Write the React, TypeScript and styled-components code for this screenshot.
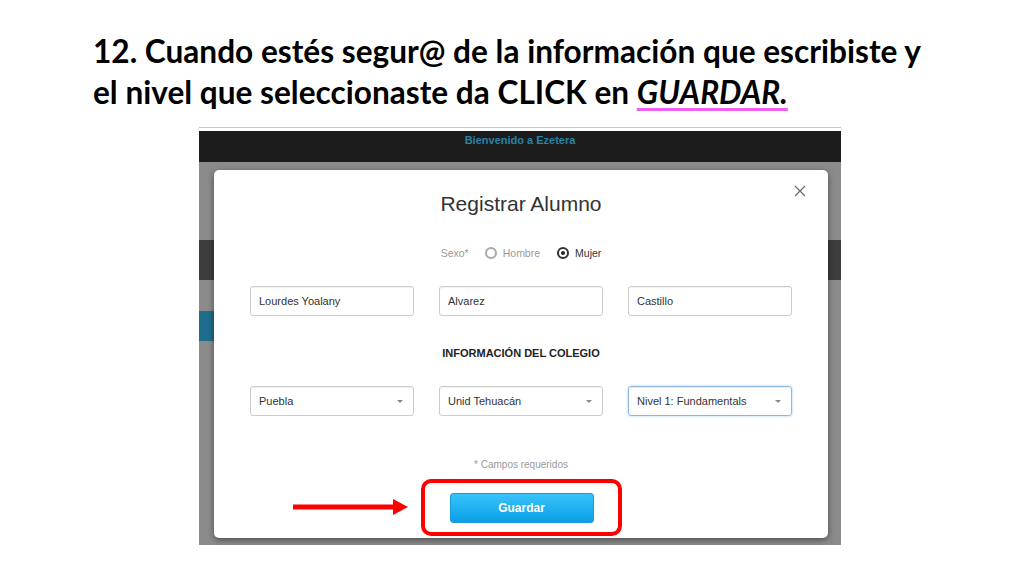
import React from "react";
import styled, { createGlobalStyle } from "styled-components";

const Global = createGlobalStyle`
  html, body { margin: 0; padding: 0; background: #ffffff; }
  body { width: 1024px; height: 576px; overflow: hidden; }
  * { box-sizing: border-box; }
`;

const Slide = styled.div`
  width: 1024px;
  height: 576px;
  background: #ffffff;
  display: flex;
  flex-direction: column;
`;

const Heading = styled.h1`
  margin: 0;
  height: 127px;
  padding: 31px 0 0 93px;
  font-family: Lato, "Open Sans", sans-serif;
  font-weight: 700;
  font-size: 31.6px;
  line-height: 41px;
  color: #000000;
  letter-spacing: 0;
  white-space: nowrap;
`;

const Emph = styled.em`
  font-style: italic;
  text-decoration: underline;
  text-decoration-color: #f060f0;
  text-decoration-thickness: 3px;
  text-underline-offset: 4px;
`;

const Shot = styled.div`
  margin-left: 199px;
  width: 642px;
  height: 418px;
  border-top: 1px solid #c8c8c8;
  padding-top: 3px;
  display: flex;
  flex-direction: column;
`;

const TopBar = styled.div`
  height: 31px;
  background: #1c1c1c;
  display: flex;
  justify-content: center;
  padding-top: 3px;
  font-family: "Liberation Sans", Arial, sans-serif;
  font-weight: 700;
  font-size: 11px;
  line-height: 12px;
  color: #2a82a4;
`;

const Backdrop = styled.div`
  position: relative;
  flex: 1;
  background: #8b8b8b;
  display: flex;
  flex-direction: column;
`;

const Band = styled.div<{ $top: number; $h: number; $color: string; $w?: string }>`
  margin-top: ${(p) => p.$top}px;
  height: ${(p) => p.$h}px;
  width: ${(p) => p.$w ?? "100%"};
  background: ${(p) => p.$color};
`;

const Modal = styled.div`
  position: absolute;
  left: 15px;
  top: 8px;
  width: 614px;
  height: 368px;
  background: #ffffff;
  border-radius: 5px;
  box-shadow: 0 2px 6px rgba(0, 0, 0, 0.45);
  display: flex;
  flex-direction: column;
  align-items: center;
  padding-top: 22px;
  font-family: "Liberation Sans", Arial, sans-serif;
  color: #333333;
`;

const Close = styled.button`
  position: absolute;
  right: 22px;
  top: 15px;
  width: 12px;
  height: 12px;
  padding: 0;
  border: 0;
  background: transparent;
  display: flex;
`;

const Title = styled.h2`
  margin: 0;
  font-weight: 400;
  font-size: 21px;
  line-height: 24px;
  color: #333333;
`;

const SexRow = styled.div`
  margin-top: 30px;
  height: 14px;
  display: flex;
  align-items: center;
  font-size: 10.5px;
  line-height: 14px;
`;

const SexLabel = styled.span`
  color: #9a9a9a;
  margin-right: 16px;
`;

const Option = styled.label<{ $on?: boolean }>`
  display: flex;
  align-items: center;
  gap: 6px;
  color: ${(p) => (p.$on ? "#333333" : "#9a9a9a")};
  margin-right: ${(p) => (p.$on ? 0 : 17)}px;
`;

const Radio = styled.span<{ $on?: boolean }>`
  width: 12px;
  height: 12px;
  border-radius: 50%;
  border: 2px solid ${(p) => (p.$on ? "#333333" : "#a8a8a8")};
  display: flex;
  align-items: center;
  justify-content: center;
  &::after {
    content: "";
    width: 4px;
    height: 4px;
    border-radius: 50%;
    background: ${(p) => (p.$on ? "#222222" : "transparent")};
  }
`;

const FieldRow = styled.div<{ $top: number }>`
  margin-top: ${(p) => p.$top}px;
  display: grid;
  grid-template-columns: repeat(3, 164px);
  column-gap: 25px;
`;

const Field = styled.div<{ $focus?: boolean }>`
  height: 30px;
  border: 1px solid ${(p) => (p.$focus ? "#8fb8dc" : "#cccccc")};
  border-radius: 3px;
  box-shadow: ${(p) =>
    p.$focus
      ? "inset 0 1px 1px rgba(0,0,0,.075), 0 0 3px rgba(102,175,233,.55)"
      : "inset 0 1px 1px rgba(0,0,0,.06)"};
  display: flex;
  align-items: center;
  justify-content: space-between;
  padding: 0 10px 0 8px;
  font-size: 11px;
  color: #333333;
`;

const Caret = styled.span`
  width: 0;
  height: 0;
  border-left: 3px solid transparent;
  border-right: 3px solid transparent;
  border-top: 3px solid #8a8a8a;
`;

const Section = styled.h3`
  margin: 30px 0 0;
  font-size: 11px;
  line-height: 14px;
  font-weight: 700;
  color: #222222;
`;

const Note = styled.p`
  margin: 43px 0 0;
  font-size: 10px;
  line-height: 12px;
  color: #999999;
`;

const Highlight = styled.div`
  position: relative;
  margin-top: 8px;
  width: 201px;
  height: 57px;
  border: 4px solid #ff0000;
  border-radius: 10px;
  padding: 10px 0 0 25px;
`;

const Arrow = styled.svg`
  position: absolute;
  right: calc(100% + 17px);
  top: 16px;
`;

const SaveButton = styled.button`
  width: 144px;
  height: 30px;
  border: 1px solid #1b9bd8;
  border-radius: 3px;
  background: linear-gradient(#38c3fb, #0a9fe6);
  color: #ffffff;
  font-family: "Liberation Sans", Arial, sans-serif;
  font-weight: 700;
  font-size: 12px;
  padding: 0;
  cursor: pointer;
`;

const names = ["Lourdes Yoalany", "Alvarez", "Castillo"];
const selects = ["Puebla", "Unid Tehuacán", "Nivel 1: Fundamentals"];

export default function App() {
  return (
    <Slide>
      <Global />
      <Heading>
        12. Cuando estés segur@ de la información que escribiste y
        <br />
        el nivel que seleccionaste da CLICK en <Emph>GUARDAR.</Emph>
      </Heading>
      <Shot>
        <TopBar>Bienvenido a Ezetera</TopBar>
        <Backdrop>
          <Band $top={78} $h={40} $color="#3d3d3d" />
          <Band $top={31} $h={30} $color="#1f6d8c" $w="40px" />
          <Modal>
            <Close aria-label="Cerrar">
              <svg width="12" height="12" viewBox="0 0 12 12">
                <path d="M1 1 L11 11 M11 1 L1 11" stroke="#6a6a6a" strokeWidth="1.2" fill="none" />
              </svg>
            </Close>
            <Title>Registrar Alumno</Title>
            <SexRow>
              <SexLabel>Sexo*</SexLabel>
              <Option>
                <Radio />
                Hombre
              </Option>
              <Option $on>
                <Radio $on />
                Mujer
              </Option>
            </SexRow>
            <FieldRow $top={26}>
              {names.map((n) => (
                <Field key={n}>{n}</Field>
              ))}
            </FieldRow>
            <Section>INFORMACIÓN DEL COLEGIO</Section>
            <FieldRow $top={26}>
              {selects.map((s, i) => (
                <Field key={s} $focus={i === 2}>
                  {s}
                  <Caret />
                </Field>
              ))}
            </FieldRow>
            <Note>* Campos requeridos</Note>
            <Highlight>
              <Arrow width="115" height="16" viewBox="0 0 115 16">
                <rect x="0" y="5.5" width="102" height="5" fill="#ff0000" />
                <polygon points="100,0 115,8 100,16" fill="#ff0000" />
              </Arrow>
              <SaveButton>Guardar</SaveButton>
            </Highlight>
          </Modal>
        </Backdrop>
      </Shot>
    </Slide>
  );
}
